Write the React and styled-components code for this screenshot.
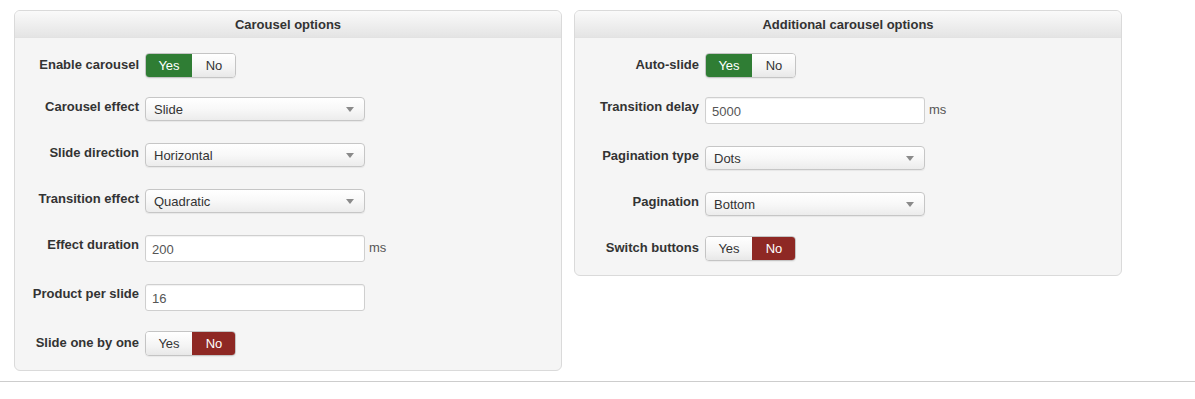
import React from "react";
import styled, { createGlobalStyle } from "styled-components";

const Global = createGlobalStyle`
  html, body { margin: 0; padding: 0; background: #fff; }
  body { font-family: "Liberation Sans", Arial, sans-serif; font-size: 13px; color: #333; }
  * { box-sizing: border-box; }
`;

const Page = styled.div`
  padding: 10px 0 0;
`;

const Columns = styled.div`
  display: flex;
  align-items: flex-start;
  gap: 12px;
  padding: 0 14px;
`;

const Panel = styled.section`
  width: 548px;
  border: 1px solid #dadada;
  border-radius: 6px;
  background: #f5f5f5;
  overflow: hidden;
`;

const PanelHeader = styled.h3`
  margin: 0;
  height: 27px;
  padding-top: 3px;
  line-height: 22px;
  text-align: center;
  font-size: 13px;
  font-weight: bold;
  color: #333;
  background: linear-gradient(to bottom, #fafafa 0%, #eeeeee 55%, #e4e4e4 100%);
  border-bottom: 1px solid #e2e2e2;
`;

const PanelBody = styled.div`
  padding: 17px 0 17px;
  display: flex;
  flex-direction: column;
`;

const Row = styled.div`
  display: flex;
  align-items: flex-start;
  margin-bottom: 22px;
  &:last-child { margin-bottom: 0; }
`;

const Label = styled.label`
  width: 124px;
  margin-right: 6px;
  text-align: right;
  font-weight: bold;
  font-size: 13px;
  line-height: 20px;
  color: #333;
  white-space: nowrap;
`;

const Toggle = styled.div`
  display: flex;
  margin: -2px 0 -3px;
  height: 25px;
  border: 1px solid #c4c4c4;
  border-radius: 4px;
  overflow: hidden;
  box-shadow: 0 1px 1px rgba(0,0,0,0.05);
`;

const ToggleButton = styled.span`
  display: flex;
  align-items: center;
  justify-content: center;
  width: ${(p) => p.$w}px;
  height: 100%;
  font-size: 13px;
  color: ${(p) => (p.$tone ? "#fff" : "#333")};
  background: ${(p) =>
    p.$tone === "yes"
      ? "#2f7d34"
      : p.$tone === "no"
      ? "#8e2824"
      : "linear-gradient(to bottom, #ffffff 0%, #f4f4f4 60%, #e8e8e8 100%)"};
  & + & { border-left: 1px solid ${(p) => (p.$tone ? "transparent" : "#d0d0d0")}; }
`;

const SelectBox = styled.div`
  position: relative;
  width: 220px;
  height: 24px;
  border: 1px solid #c6c6c6;
  border-radius: 4px;
  background: linear-gradient(to bottom, #ffffff 0%, #f8f8f8 50%, #ececec 100%);
  box-shadow: 0 1px 1px rgba(0,0,0,0.06);
  display: flex;
  align-items: center;
  padding-left: 8px;
  padding-top: 1px;
  font-size: 13px;
  color: #333;
`;

const Caret = styled.span`
  position: absolute;
  right: 10px;
  top: 9px;
  width: 0;
  height: 0;
  border-left: 4px solid transparent;
  border-right: 4px solid transparent;
  border-top: 5px solid #8a8a8a;
`;

const Input = styled.div`
  width: 220px;
  height: 27px;
  border: 1px solid #cfcfcf;
  border-radius: 3px;
  background: #fff;
  box-shadow: inset 0 1px 1px rgba(0,0,0,0.06);
  display: flex;
  align-items: center;
  padding-left: 6px;
  padding-top: 2px;
  font-size: 13px;
  color: #555;
`;

const Unit = styled.span`
  margin-left: 4px;
  line-height: 26px;
  font-size: 13px;
  color: #555;
`;

const Divider = styled.hr`
  margin: 10px 0 0;
  border: 0;
  border-top: 1px solid #cdcdcd;
  height: 0;
`;

const YesNo = ({ value }) => (
  <Toggle>
    <ToggleButton $w={46} $tone={value ? "yes" : null}>Yes</ToggleButton>
    <ToggleButton $w={43} $tone={value ? null : "no"}>No</ToggleButton>
  </Toggle>
);

const Select = ({ value }) => (
  <SelectBox>
    {value}
    <Caret />
  </SelectBox>
);

const Field = ({ label, children }) => (
  <Row>
    <Label>{label}</Label>
    {children}
  </Row>
);

export default function App() {
  return (
    <Page>
      <Global />
      <Columns>
        <Panel>
          <PanelHeader>Carousel options</PanelHeader>
          <PanelBody>
            <Field label="Enable carousel">
              <YesNo value={true} />
            </Field>
            <Field label="Carousel effect">
              <Select value="Slide" />
            </Field>
            <Field label="Slide direction">
              <Select value="Horizontal" />
            </Field>
            <Field label="Transition effect">
              <Select value="Quadratic" />
            </Field>
            <Field label="Effect duration">
              <Input>200</Input>
              <Unit>ms</Unit>
            </Field>
            <Field label="Product per slide">
              <Input>16</Input>
            </Field>
            <Field label="Slide one by one">
              <YesNo value={false} />
            </Field>
          </PanelBody>
        </Panel>
        <Panel>
          <PanelHeader>Additional carousel options</PanelHeader>
          <PanelBody>
            <Field label="Auto-slide">
              <YesNo value={true} />
            </Field>
            <Field label="Transition delay">
              <Input>5000</Input>
              <Unit>ms</Unit>
            </Field>
            <Field label="Pagination type">
              <Select value="Dots" />
            </Field>
            <Field label="Pagination">
              <Select value="Bottom" />
            </Field>
            <Field label="Switch buttons">
              <YesNo value={false} />
            </Field>
          </PanelBody>
        </Panel>
      </Columns>
      <Divider />
    </Page>
  );
}
